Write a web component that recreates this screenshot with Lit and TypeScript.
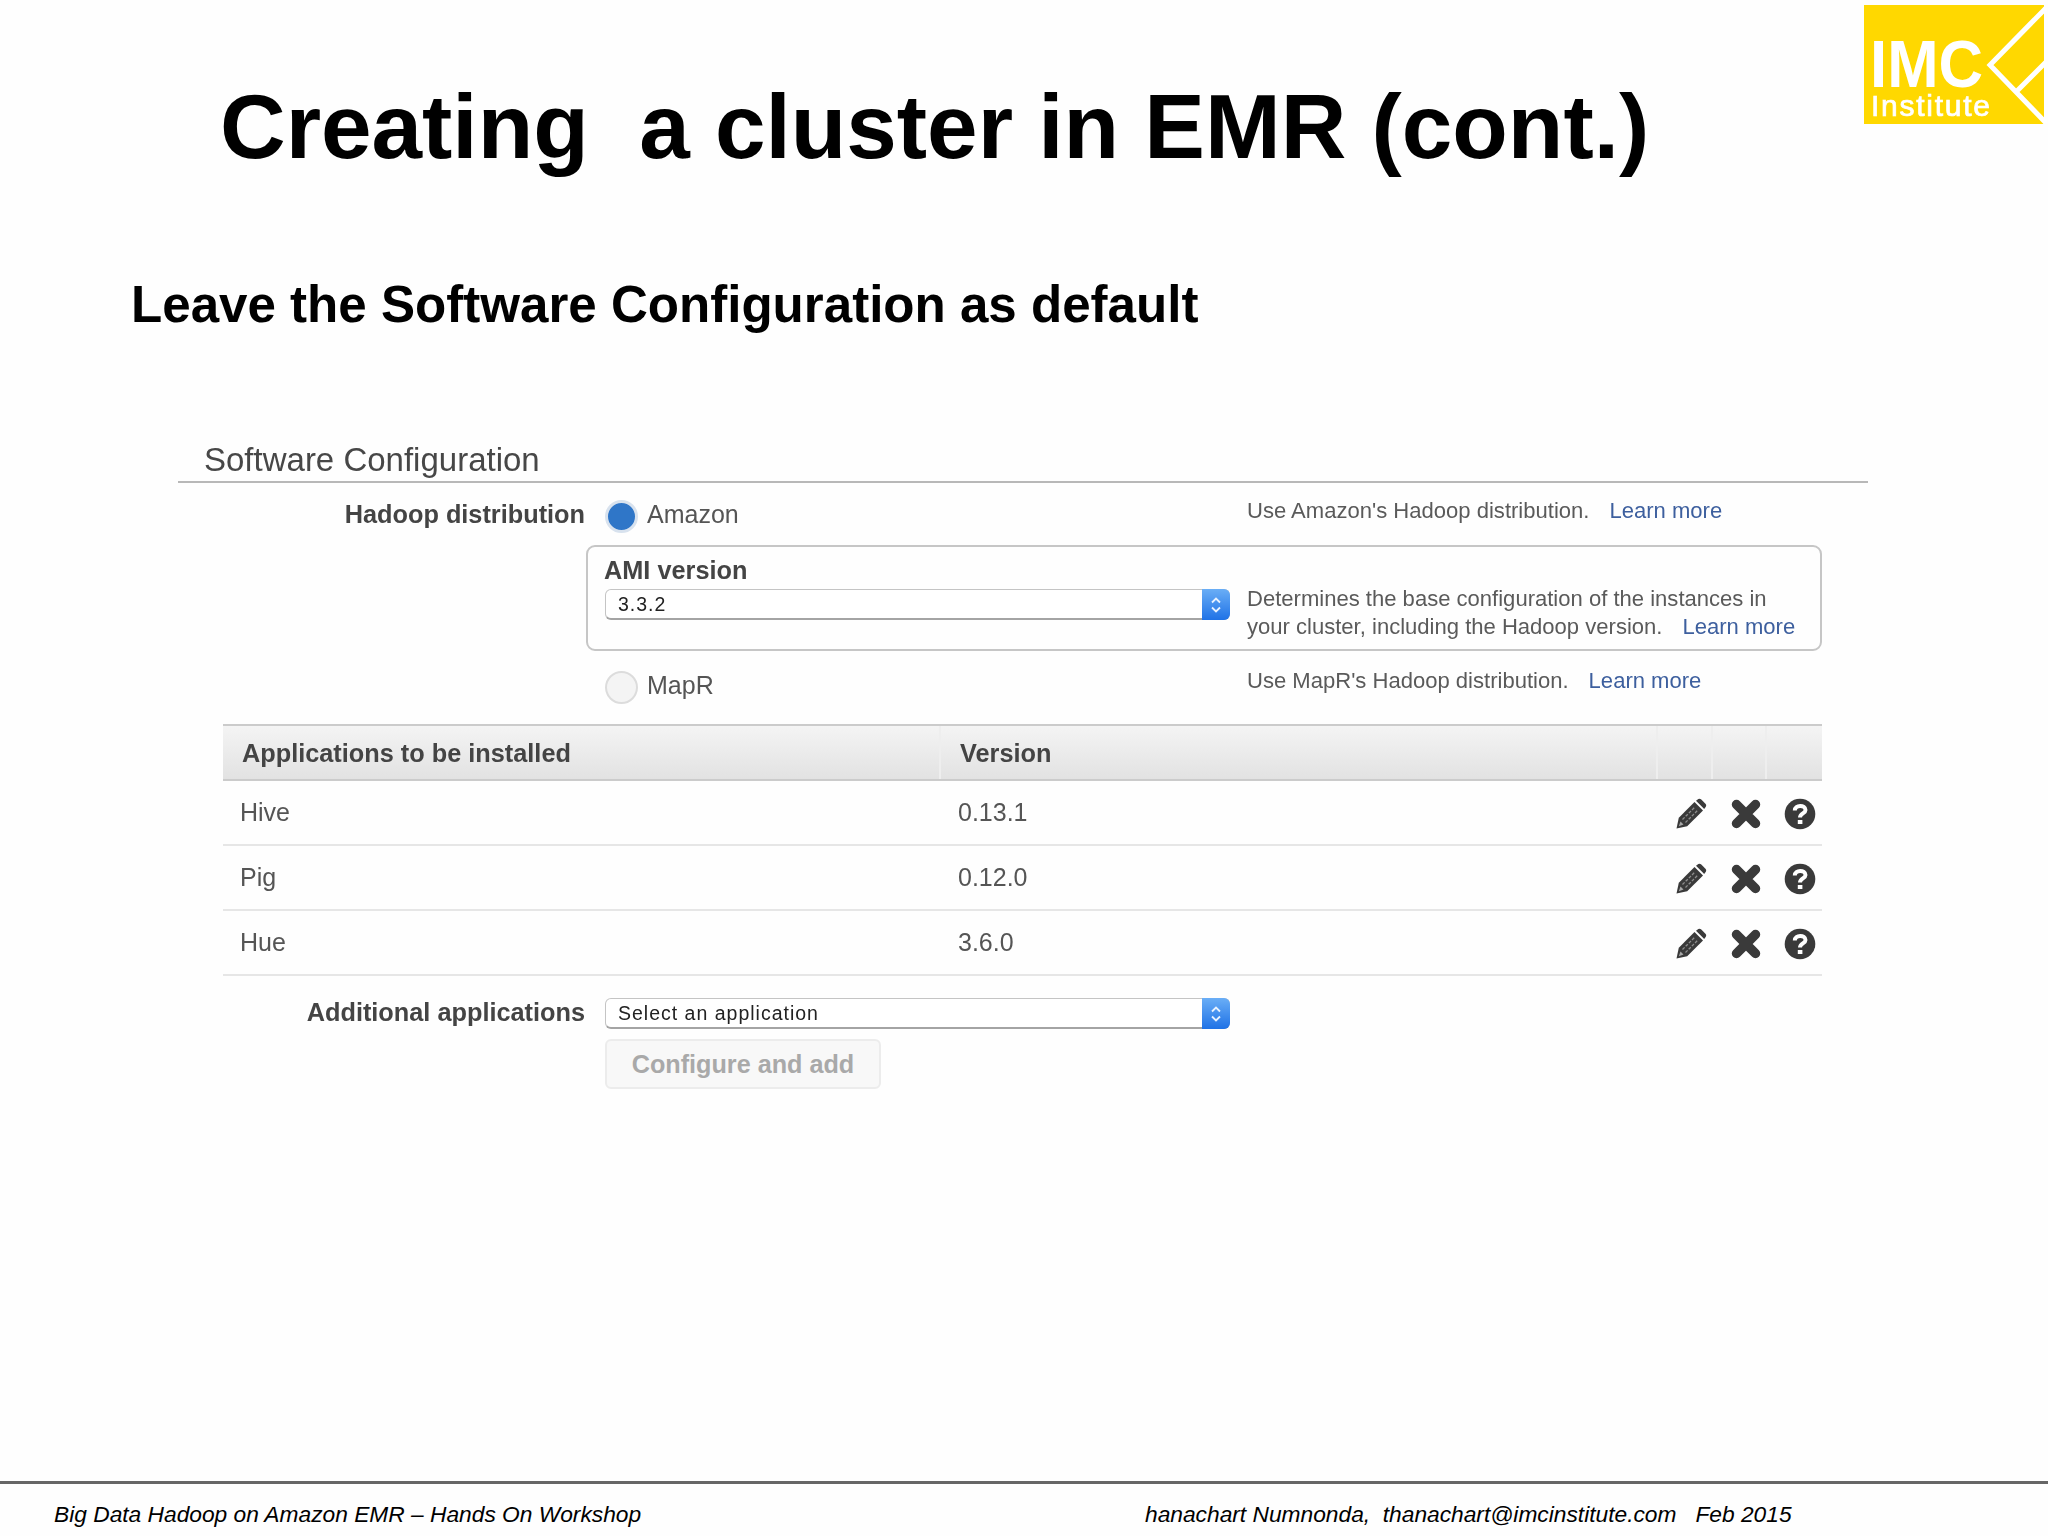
import { LitElement, html, css, svg } from "lit";
import { customElement } from "lit/decorators.js";

const caret = html`<span class="caret"><svg width="14" height="22" viewBox="0 0 14 22"><path class="chev" d="M3 8.500 L7 4.500 L11 8.500 M3 13.500 L7 17.500 L11 13.500"/></svg></span>`;

const pencil = svg`<svg class="ico" width="32" height="32" viewBox="0 0 32 32"><path class="solid" d="M1.500 30.500 L3.800 19.800 L19.500 4 L28 12.500 L12.200 28.200 Z"/><path class="solid" d="M21 2.800 L23.300 1 Q24.800 0.300 26 1.300 L30.700 6 Q31.600 7.200 30.800 8.700 L29.200 11 Z"/><path class="cut" d="M7.500 21.500 L19.500 9.500 M10.500 24.500 L22.500 12.500"/><path class="tip" d="M3.800 28.200 L5.500 23.500 L8.500 26.500 Z"/></svg>`;

const cross = svg`<svg class="ico" width="32" height="32" viewBox="0 0 32 32"><path class="x" d="M6.500 6.500 L25.500 25.500 M25.500 6.500 L6.500 25.500"/></svg>`;

const help = svg`<svg class="ico" width="32" height="32" viewBox="0 0 32 32"><circle class="solid" cx="16" cy="16" r="15.300"/><path class="q" d="M10.800 12.500 C10.800 6.500 21.500 6.500 21.500 12 C21.500 15.500 16 15.500 16 19.500"/><rect class="dot" x="13.800" y="22" width="4.600" height="4"/></svg>`;

const apps = [
  ["Hive", "0.13.1"],
  ["Pig", "0.12.0"],
  ["Hue", "3.6.0"],
];

@customElement("app-root")
export class AppRoot extends LitElement {
  static styles = css`
    :host {
      display: block;
      position: relative;
      width: 2048px;
      height: 1536px;
      overflow: hidden;
      background: #fefefe;
      font-family: "Liberation Sans", Arial, sans-serif;
      color: #000;
    }
    .page { display: flex; flex-direction: column; height: 1536px; }
    .title {
      margin: 72px 0 0 220px;
      font-size: 90.9px;
      line-height: 110px;
      font-weight: 700;
      white-space: pre;
      filter: blur(0.3px);
    }
    .subtitle {
      margin: 93px 0 0 131px;
      font-size: 51.1px;
      line-height: 60px;
      font-weight: 700;
      filter: blur(0.3px);
    }
    .logo { position: absolute; left: 1864px; top: 5px; width: 184px; height: 120px; filter: blur(0.4px); }
    .logo text { fill: #fff; font-family: "Liberation Sans", Arial, sans-serif; }
    .logo .imc { font-size: 66px; font-weight: 700; }
    .logo .inst { font-size: 30px; stroke: #fff; stroke-width: 0.7px; }
    .logo .chevron { fill: none; stroke: #fff; stroke-width: 5; }

    .form { margin: 104px 0 0 178px; width: 1690px; color: #444; filter: blur(0.6px); }
    .heading {
      height: 42px;
      line-height: 42px;
      padding-left: 26px;
      font-size: 33px;
      border-bottom: 2px solid #b8b8b8;
      color: #474747;
    }
    .body { margin-left: 45px; width: 1599px; }
    .row { display: grid; grid-template-columns: 362px 662px 1fr; align-items: center; }
    .row.top { height: 62px; padding-top: 5px; box-sizing: border-box; }
    .row.bottom { height: 73px; }
    .label { font-size: 25.3px; font-weight: 700; text-align: right; color: #444; }
    .top .label { padding-bottom: 4px; }
    .choice { display: flex; align-items: center; gap: 9px; padding-left: 20px; font-size: 25px; color: #555; }
    .choice span.word { margin-top: -4px; }
    .radio { width: 33px; height: 33px; border-radius: 50%; box-sizing: border-box; border: 2px solid #dcdcdc; background: #f4f4f4; }
    .radio.on { background: #2f76c8; border: 3px solid #d8e2ee; }
    .note { font-size: 22.05px; line-height: 27.5px; color: #5a5a5a; }
    .top .note { padding-bottom: 12px; }
    .bottom .note { padding-bottom: 14px; }
    .note a { margin-left: 20px; color: #3d5f9e; text-decoration: none; }

    .ami {
      margin-left: 363px;
      width: 1236px;
      height: 106px;
      box-sizing: border-box;
      border: 2px solid #c6c6c6;
      border-radius: 9px;
      padding: 9px 0 0 16px;
      display: flex;
      gap: 17px;
    }
    .ami-left { width: 626px; }
    .ami-label { font-size: 25.3px; line-height: 30px; font-weight: 700; margin: -1px 0 4px; }
    .ami .select { margin-left: 1px; }
    .ami .note { margin-top: 29px; white-space: nowrap; }

    .select {
      height: 31px;
      box-sizing: border-box;
      width: 625px;
      background: #fff;
      border: 1px solid #c4c4c4;
      border-bottom: 2px solid #a4a4a4;
      border-radius: 6px;
      display: flex;
      align-items: center;
      justify-content: space-between;
      padding-left: 12px;
      font-size: 19.5px;
      letter-spacing: 1px;
      color: #222;
    }
    .caret {
      width: 28px;
      height: 31px;
      margin: -1px -1px -2px 0;
      border-radius: 0 6px 6px 0;
      background: linear-gradient(#6aaef6, #1f72e6);
      display: flex;
      align-items: center;
      justify-content: center;
    }
    .chev { fill: none; stroke: #e8f2ff; stroke-width: 1.800; }

    .grid { display: grid; grid-template-columns: 718px 717px 55px 54px 55px; align-items: center; }
    .thead {
      height: 57px;
      box-sizing: border-box;
      border-top: 2px solid #cbcbcb;
      border-bottom: 2px solid #cbcbcb;
      background: linear-gradient(#f4f4f4, #e2e2e2);
      font-size: 25.3px;
      font-weight: 700;
      color: #444;
    }
    .thead > div { height: 100%; display: flex; align-items: center; box-sizing: border-box; padding: 1px 0 0 19px; border-right: 2px solid #eeeeee; }
    .thead > div:last-child { border-right: 0; }
    .tr { height: 65px; box-sizing: border-box; border-bottom: 2px solid #e6e6e6; font-size: 25px; color: #555; }
    .tr .name { padding-left: 17px; padding-bottom: 1px; }
    .tr .ver { padding-left: 17px; padding-bottom: 1px; }
    .tr .cell { display: flex; justify-content: center; padding: 3px 0 0 11px; }
    .ico { display: block; }
    .solid { fill: #3a3a3a; }
    .cut { fill: none; stroke: #8e8e8e; stroke-width: 1.300; stroke-dasharray: 3 1.500; }
    .tip { fill: #a8a8a8; }
    .x { fill: none; stroke: #3a3a3a; stroke-width: 9.500; stroke-linecap: round; }
    .q { fill: none; stroke: #fff; stroke-width: 4; }
    .dot { fill: #fff; }

    .row.extra { align-items: start; margin-top: 22px; }
    .extra .label { line-height: 30px; margin-top: -1px; }
    .extra .stack { padding-left: 20px; display: flex; flex-direction: column; gap: 10px; align-items: flex-start; }
    .button {
      width: 276px;
      height: 50px;
      box-sizing: border-box;
      border: 2px solid #ececec;
      border-radius: 6px;
      background: #f8f8f8;
      color: #a9a9a9;
      font-size: 25.2px;
      font-weight: 700;
      display: flex;
      align-items: center;
      justify-content: center;
    }

    .footer {
      margin-top: auto;
      height: 55px;
      box-sizing: border-box;
      border-top: 3px solid #666;
      display: flex;
      align-items: center;
      padding: 8px 0 0 54px;
      font-size: 22.75px;
      font-style: italic;
      white-space: pre;
    }
    .footer .left { width: 1091px; }
  `;

  render() {
    return html`
      <div class="page">
        <h1 class="title">Creating  a cluster in EMR (cont.)</h1>
        <div class="subtitle">Leave the Software Configuration as default</div>

        <section class="form">
          <div class="heading">Software Configuration</div>
          <div class="body">
            <div class="row top">
              <div class="label">Hadoop distribution</div>
              <div class="choice"><span class="radio on"></span><span class="word">Amazon</span></div>
              <div class="note">Use Amazon's Hadoop distribution.<a>Learn more</a></div>
            </div>
            <div class="ami">
              <div class="ami-left">
                <div class="ami-label">AMI version</div>
                <div class="select"><span>3.3.2</span>${caret}</div>
              </div>
              <div class="note">Determines the base configuration of the instances in<br />your cluster, including the Hadoop version.<a>Learn more</a></div>
            </div>
            <div class="row bottom">
              <div></div>
              <div class="choice"><span class="radio"></span><span class="word">MapR</span></div>
              <div class="note">Use MapR's Hadoop distribution.<a>Learn more</a></div>
            </div>

            <div class="grid thead">
              <div>Applications to be installed</div>
              <div>Version</div>
              <div></div><div></div><div></div>
            </div>
            ${apps.map(([n, v]) => html`
              <div class="grid tr">
                <div class="name">${n}</div>
                <div class="ver">${v}</div>
                <div class="cell">${pencil}</div>
                <div class="cell">${cross}</div>
                <div class="cell">${help}</div>
              </div>`)}

            <div class="row extra">
              <div class="label">Additional applications</div>
              <div class="stack">
                <div class="select"><span>Select an application</span>${caret}</div>
                <div class="button">Configure and add</div>
              </div>
            </div>
          </div>
        </section>

        <footer class="footer">
          <span class="left">Big Data Hadoop on Amazon EMR – Hands On Workshop</span>
          <span>hanachart Numnonda,  thanachart@imcinstitute.com   Feb 2015</span>
        </footer>
      </div>

      <svg class="logo" viewBox="0 0 184 120">
        <rect x="0" y="0" width="180" height="119" fill="#ffd800"></rect>
        <text class="imc" x="6" y="82" textLength="113" lengthAdjust="spacingAndGlyphs">IMC</text>
        <text class="inst" x="7" y="111" textLength="119">Institute</text>
        <path class="chevron" d="M182 3 L126 60 L182 118 M152 87 L182 57"></path>
      </svg>
    `;
  }
}
